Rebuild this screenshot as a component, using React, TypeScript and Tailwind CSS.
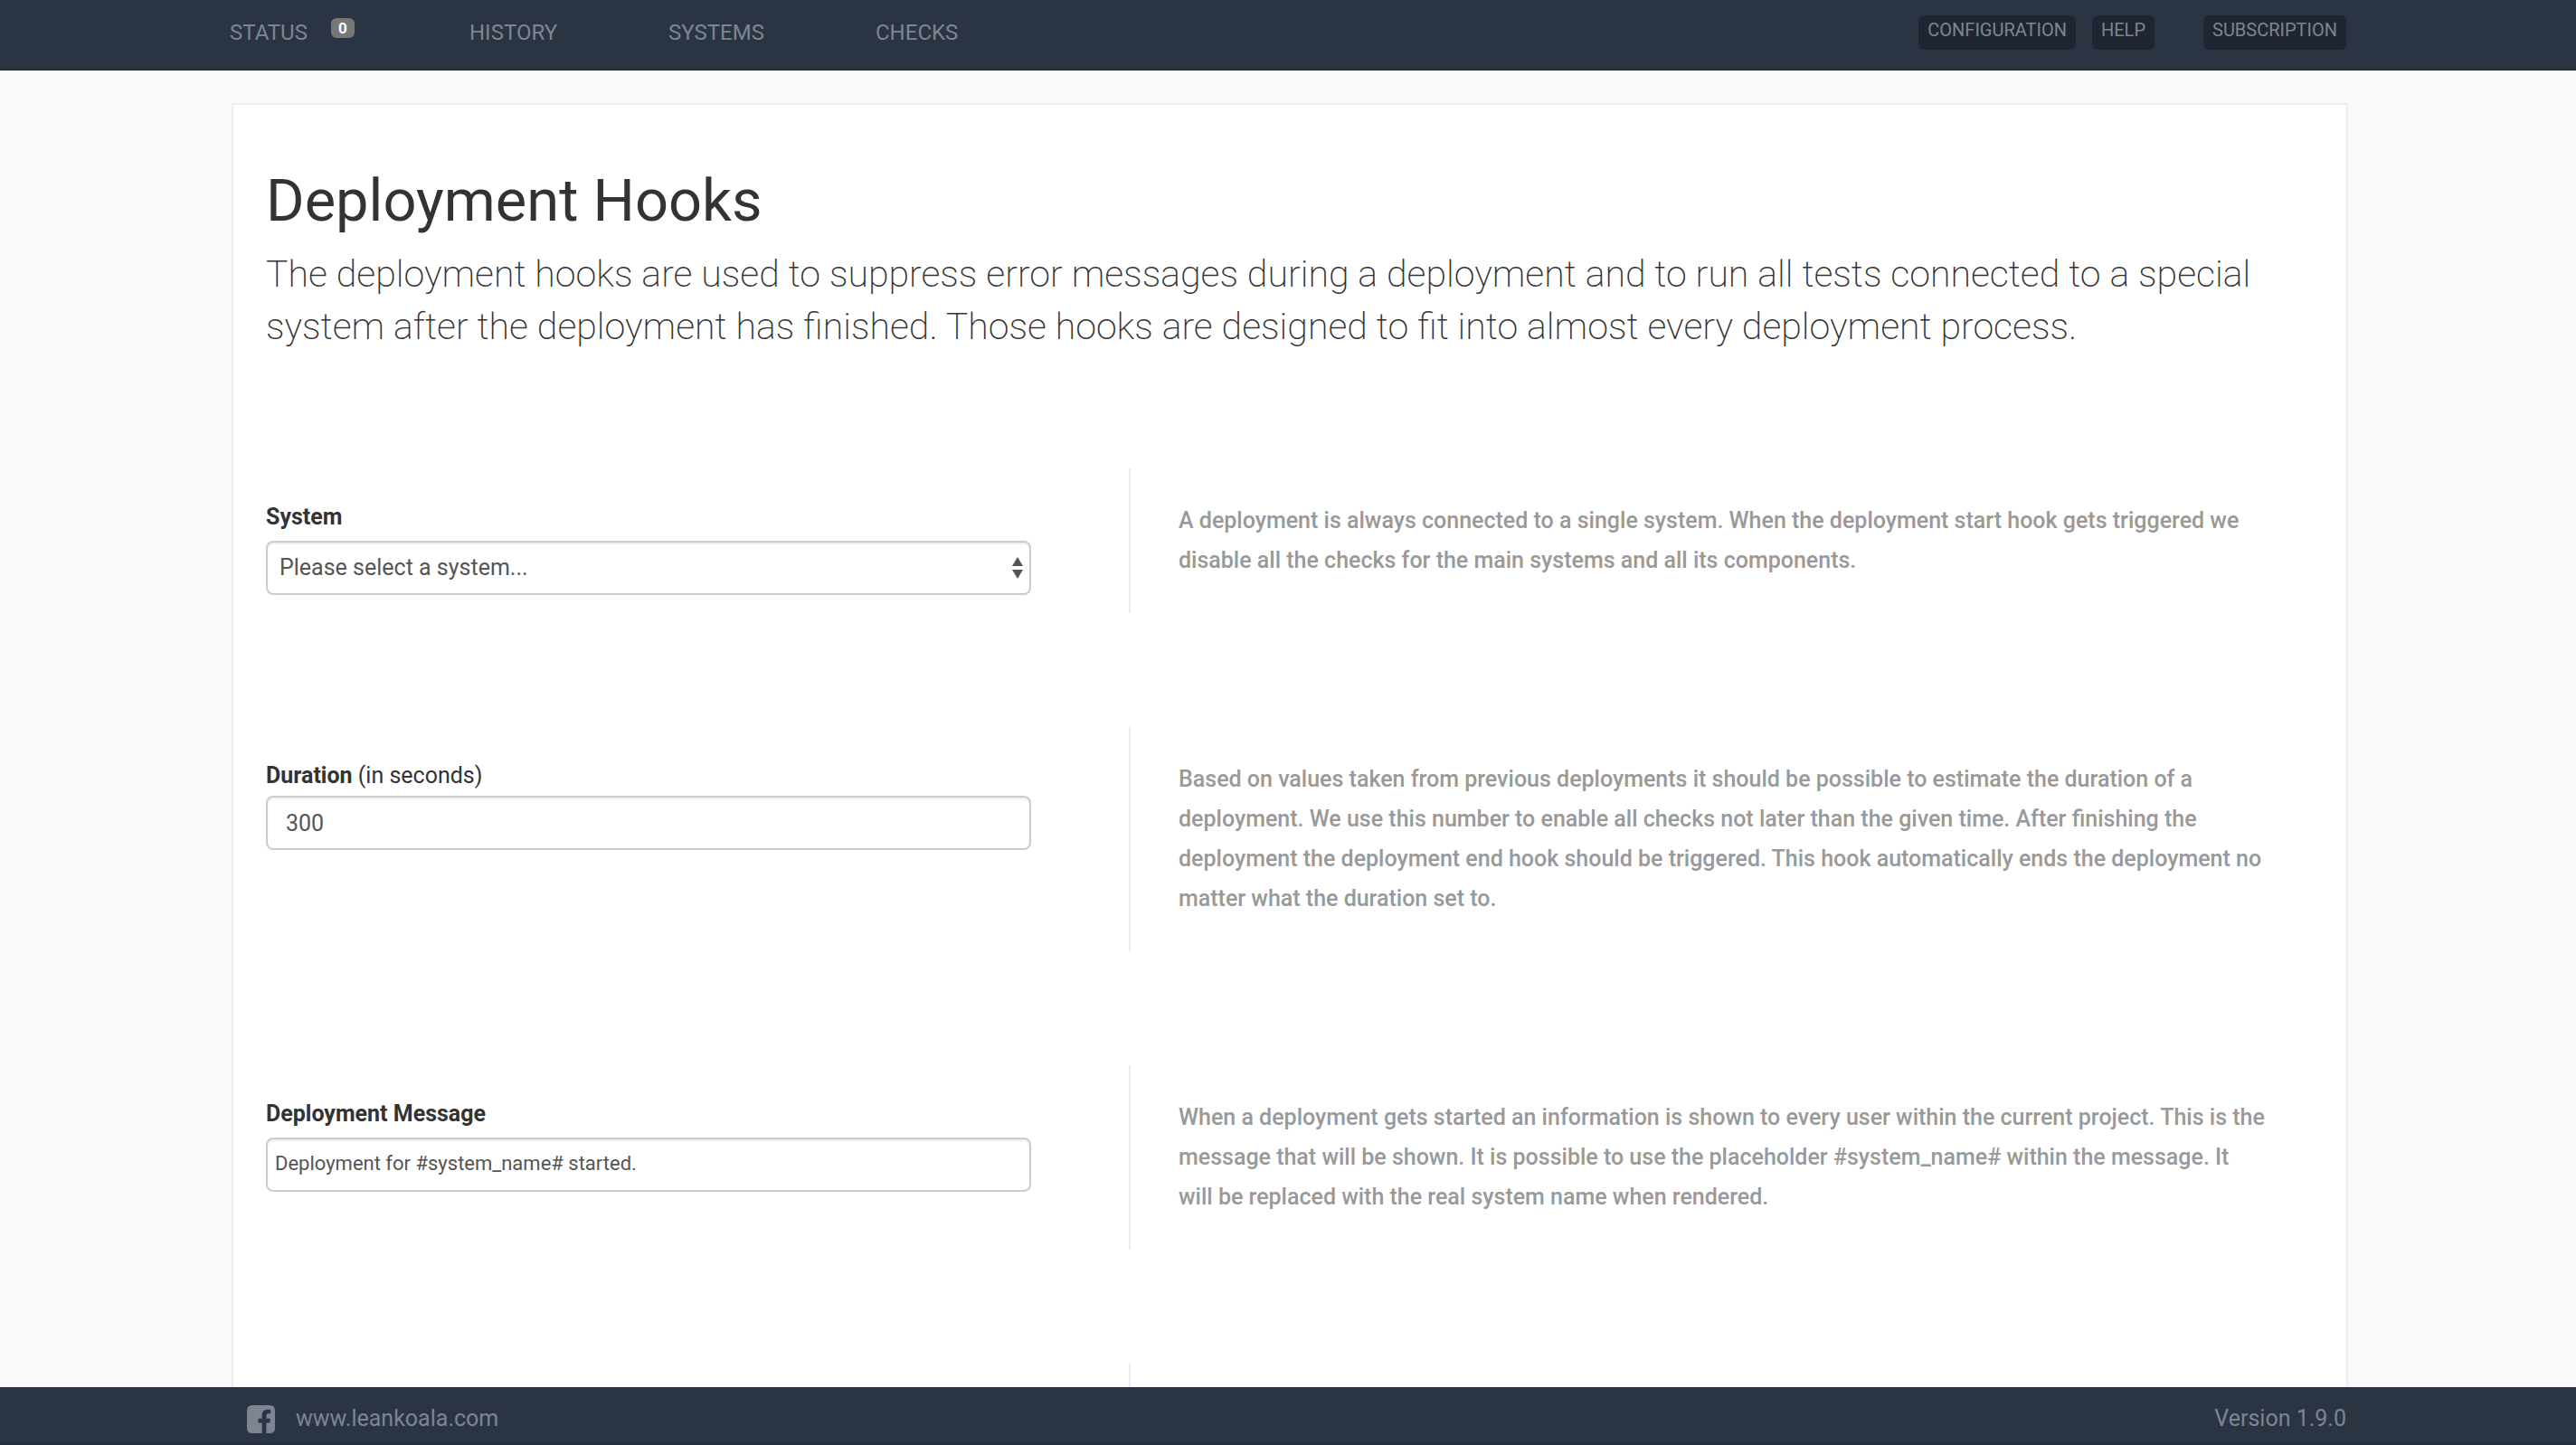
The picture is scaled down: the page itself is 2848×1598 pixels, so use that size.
import type { ReactNode } from "react";

const navItems = [
  { label: "HISTORY", width: "w-[220px]" },
  { label: "SYSTEMS", width: "w-[229px]" },
  { label: "CHECKS", width: "w-[200px]" },
];

const fieldClass =
  "block h-[60px] w-full appearance-none rounded-lg border-2 border-[#cccccc] bg-white text-[#555555] shadow-[inset_0_2px_2px_rgba(0,0,0,0.075)] outline-none";

function BarButton({ children }: { children: ReactNode }) {
  return (
    <button
      type="button"
      className="h-[38px] rounded-md bg-[#202532] px-[10px] pb-1.5 text-[20px] leading-8 text-[#7e8592]"
    >
      {children}
    </button>
  );
}

function Row({ field, children }: { field?: ReactNode; children?: ReactNode }) {
  return (
    <section className="grid min-h-[160px] grid-cols-[954fr_1310fr]">
      <div className="pt-9 pr-[108px]">{field}</div>
      <p className="border-l-2 border-[#ebedee] py-9 pr-[52px] pl-[53px] text-[25px] leading-[44px] font-medium text-[#999999]">
        {children}
      </p>
    </section>
  );
}

export default function App() {
  return (
    <div className="flex h-screen flex-col overflow-hidden bg-[#f9f9fb] font-[Roboto,sans-serif] text-[#333333]">
      <header className="flex h-[78px] shrink-0 items-start justify-between border-b-2 border-[#252e3d] bg-[#2b3443] pr-[254px] pl-[254px]">
        <nav className="flex pt-5 text-[24px] leading-8 text-[#7e8592]">
          <a href="#status" className="flex w-[265px] items-start">
            STATUS
            <span className="ml-[26px] h-[22px] rounded-md bg-[#777777] px-2 text-[17px] leading-[22px] font-bold text-white">
              0
            </span>
          </a>
          {navItems.map((item) => (
            <a key={item.label} href={"#" + item.label.toLowerCase()} className={item.width}>
              {item.label}
            </a>
          ))}
        </nav>
        <div className="flex gap-[18px] pt-[17px]">
          <BarButton>CONFIGURATION</BarButton>
          <BarButton>HELP</BarButton>
          <div className="ml-9">
            <BarButton>SUBSCRIPTION</BarButton>
          </div>
        </div>
      </header>

      <main className="min-h-0 flex-1 overflow-hidden pt-9 pr-[252px] pl-[256px]">
        <div className="border-2 border-[#eeeeee] bg-white px-9">
          <h1 className="pt-[62px] text-[65px] leading-[88px]">Deployment Hooks</h1>
          <p className="pt-2 pb-32 text-[41px] leading-[58px] font-extralight">
            The deployment hooks are used to suppress error messages during a deployment and to run all tests
            connected to a special system after the deployment has finished. Those hooks are designed to fit into
            almost every deployment process.
          </p>

          <div className="flex flex-col gap-[126px] text-[25px] leading-9">
            <Row
              field={
                <>
                  <label htmlFor="system" className="block pb-2 font-bold">
                    System
                  </label>
                  <div className="relative">
                    <select id="system" className={fieldClass + " px-[13px] text-[25px]"}>
                      <option>Please select a system...</option>
                    </select>
                    <svg
                      viewBox="0 0 12 24"
                      className="pointer-events-none absolute top-[18px] right-[9px] h-6 w-3 fill-[#555555]"
                    >
                      <path d="M0 10L6 0L12 10ZM0 14H12L6 24Z" />
                    </svg>
                  </div>
                </>
              }
            >
              A deployment is always connected to a single system. When the deployment start hook gets triggered we
              disable all the checks for the main systems and all its components.
            </Row>
            <Row
              field={
                <>
                  <label htmlFor="duration" className="block pb-1">
                    <b>Duration</b> (in seconds)
                  </label>
                  <input id="duration" type="text" defaultValue="300" className={fieldClass + " px-5 text-[25px]"} />
                </>
              }
            >
              Based on values taken from previous deployments it should be possible to estimate the duration of a
              deployment. We use this number to enable all checks not later than the given time. After finishing the
              deployment the deployment end hook should be triggered. This hook automatically ends the deployment no
              matter what the duration set to.
            </Row>
            <Row
              field={
                <>
                  <label htmlFor="message" className="block pb-2 font-bold">
                    Deployment Message
                  </label>
                  <input
                    id="message"
                    type="text"
                    defaultValue="Deployment for #system_name# started."
                    className={fieldClass + " px-2 pb-1 text-[22px]"}
                  />
                </>
              }
            >
              When a deployment gets started an information is shown to every user within the current project. This is
              the message that will be shown. It is possible to use the placeholder #system_name# within the message.
              It will be replaced with the real system name when rendered.
            </Row>
            <Row />
          </div>
        </div>
      </main>

      <footer className="flex h-16 shrink-0 items-center justify-between border-b-2 border-[#252e3d] bg-[#2b3443] pt-2 pr-[254px] pl-[273px] text-[25px] leading-8 text-[#7e8592]">
        <a href="https://www.leankoala.com" className="flex items-center gap-[23px]">
          <svg viewBox="0 0 31 31" className="size-[31px] fill-[#7e8592]">
            <path d="M6 0H25Q31 0 31 6V25Q31 31 25 31H21.5V19.5H25.3L26 14.7H21.5V11.7C21.5 10.1 22 9.2 24 9.2H26.2V4.9C25.6 4.8 24.3 4.7 22.8 4.7C19.2 4.7 16.7 6.9 16.7 11V14.7H12.5V19.5H16.7V31H6Q0 31 0 25V6Q0 0 6 0Z" />
          </svg>
          www.leankoala.com
        </a>
        <span>Version 1.9.0</span>
      </footer>
    </div>
  );
}
